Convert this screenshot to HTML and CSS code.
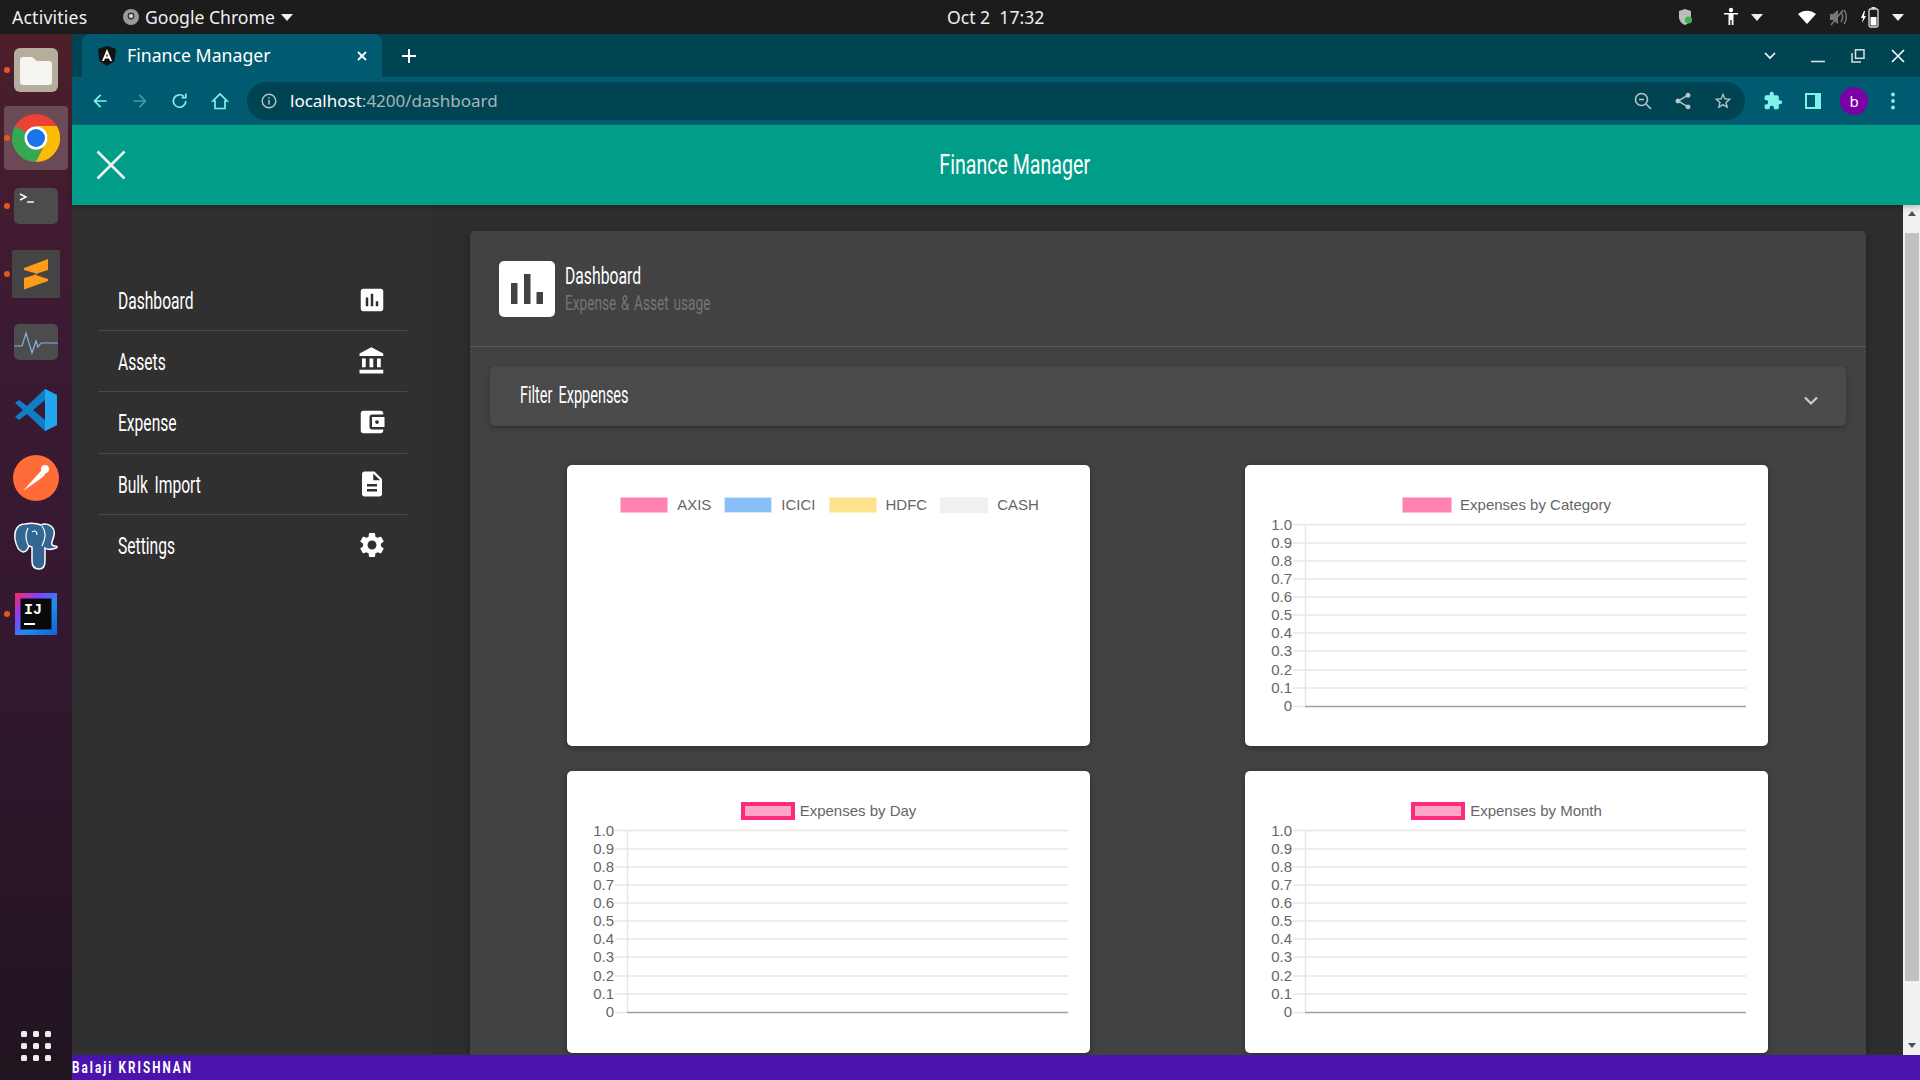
FILE: index.html
```html
<!DOCTYPE html>
<html lang="en">
<head>
    <meta charset="UTF-8">
    <title>Finance Manager</title>
    <link rel="stylesheet" href="styles.css">
</head>
<body>

    <svg class="icon-defs" width="0" height="0">
        <defs>
            <symbol id="plot" viewBox="0 -10 523 200">
                <g class="grid-line">
                    <line x1="48" x2="501" y1="1.5" y2="1.5"/>
                    <line x1="48" x2="501" y1="20" y2="20"/>
                    <line x1="48" x2="501" y1="38" y2="38"/>
                    <line x1="48" x2="501" y1="56" y2="56"/>
                    <line x1="48" x2="501" y1="74" y2="74"/>
                    <line x1="48" x2="501" y1="92" y2="92"/>
                    <line x1="48" x2="501" y1="110" y2="110"/>
                    <line x1="48" x2="501" y1="128" y2="128"/>
                    <line x1="48" x2="501" y1="147" y2="147"/>
                    <line x1="48" x2="501" y1="165" y2="165"/>
                    <line x1="48" x2="60" y1="183.5" y2="183.5"/>
                    <line x1="60.5" x2="60.5" y1="1" y2="184"/>
                </g>
                <line class="zero-line" x1="60" x2="501" y1="183.5" y2="183.5"/>
                <g class="tick-label">
                    <text x="47" y="7">1.0</text>
                    <text x="47" y="25">0.9</text>
                    <text x="47" y="43">0.8</text>
                    <text x="47" y="61">0.7</text>
                    <text x="47" y="79">0.6</text>
                    <text x="47" y="97">0.5</text>
                    <text x="47" y="115">0.4</text>
                    <text x="47" y="133">0.3</text>
                    <text x="47" y="152">0.2</text>
                    <text x="47" y="170">0.1</text>
                    <text x="47" y="188">0</text>
                </g>
            </symbol>
        </defs>
    </svg>

    <div class="topbar">
        <span class="topbar-activities">Activities</span>
        <span class="topbar-app">
            <svg class="app-glyph" width="16" height="16" viewBox="0 0 16 16"><circle cx="8" cy="8" r="8" fill="#9a9a9a"/><circle cx="8" cy="7" r="3.4" fill="#333"/><circle cx="8" cy="7" r="2" fill="#ddd"/></svg>
            Google Chrome
            <span class="caret"></span>
        </span>
        <span class="topbar-clock">Oct 2&nbsp; 17:32</span>
        <div class="tray">
            <svg class="tray-shield" width="18" height="20" viewBox="0 0 18 20"><path d="M8 2l6 2v6c0 4-3 7-6 8-3-1-6-4-6-8V4z" fill="#bdbdbd"/><circle cx="11.5" cy="13" r="3.6" fill="#3bb54a"/></svg>
            <svg class="tray-person" width="18" height="20" viewBox="0 0 18 20"><circle cx="9" cy="3" r="2.2" fill="#fff"/><path d="M2 6h14v1.6h-4.5V18H9.7v-5H8.3v5H6.500V7.600H2z" fill="#fff"/></svg>
            <span class="caret tray-caret-a"></span>
            <svg class="tray-wifi" width="20" height="16" viewBox="0 0 20 16"><path d="M1 5c5-4.500 13-4.500 18 0l-9 10z" fill="#fff"/></svg>
            <svg class="tray-sound" width="20" height="20" viewBox="0 0 20 20"><path d="M2 7h3l5-4v14l-5-4H2z" fill="#777"/><path d="M13 5c2 3 2 7 0 10M16 3c3 4 3 10 0 14" stroke="#777" stroke-width="1.500" fill="none"/><path d="M3 18L15 3" stroke="#777" stroke-width="1.500"/></svg>
            <svg class="tray-battery" width="20" height="24" viewBox="0 0 20 24"><path d="M4 6L1 13h2l-1 5 4-7H4l1-5z" fill="#fff"/><rect x="9" y="4" width="9" height="18" rx="1.500" fill="none" stroke="#ddd" stroke-width="1.300"/><rect x="11.500" y="2" width="4" height="2" fill="#ddd"/><rect x="10.500" y="12" width="6" height="8.500" fill="#fff"/></svg>
            <span class="caret tray-caret-b"></span>
        </div>
    </div>

    <div class="desktop">
        <aside class="dock">
            <div class="dock-item has-dot">
                <svg width="44" height="44" viewBox="0 0 44 44"><rect width="44" height="44" rx="6" fill="#b5ae9c"/><path d="M6 12a3 3 0 013-3h9l5 4h12a3 3 0 013 3v18a3 3 0 01-3 3H9a3 3 0 01-3-3z" fill="#f6f5f1"/></svg>
            </div>
            <div class="dock-item has-dot is-active">
                <svg width="48" height="48" viewBox="0 0 48 48"><circle cx="24" cy="24" r="24" fill="#ea4335"/><path d="M24 24L3.200 12A24 24 0 0024 48l12-24z" fill="#34a853"/><path d="M24 12h20.800A24 24 0 0124 48l12-24z" fill="#fbbc05"/><circle cx="24" cy="24" r="11.500" fill="#fff"/><circle cx="24" cy="24" r="9" fill="#1a73e8"/></svg>
            </div>
            <div class="dock-item has-dot">
                <svg width="44" height="36" viewBox="0 0 44 36"><rect width="44" height="36" rx="5" fill="#4c4c4c"/><path d="M6 6l6 3-6 3" stroke="#fff" stroke-width="1.400" fill="none"/><path d="M13 14h7" stroke="#fff" stroke-width="1.400"/></svg>
            </div>
            <div class="dock-item has-dot">
                <svg width="48" height="48" viewBox="0 0 48 48"><rect width="48" height="48" rx="2" fill="#444"/><path d="M12 18L36 9v11L22 24.500 36 29v2L12 39.500V28l14-4-14-4z" fill="#ff9a1a"/></svg>
            </div>
            <div class="dock-item">
                <svg width="44" height="36" viewBox="0 0 44 36"><rect width="44" height="36" rx="5" fill="#4c4c4c"/><path d="M0 22h8l4-13 6 20 4-12 2 6 3-4h17" stroke="#8aaee8" stroke-width="1.200" fill="none"/></svg>
            </div>
            <div class="dock-item">
                <svg width="42" height="42" viewBox="0 0 42 42"><path d="M30 0l12 6v30l-12 6-18-17-8 6-4-3 8-7-8-7 4-3 8 6z" fill="#0f7ec9"/><path d="M30 0l12 6v30l-12 6z" fill="#23a6f0"/><path d="M30 11v20l-12-10z" fill="#3c1a35"/></svg>
            </div>
            <div class="dock-item">
                <svg width="46" height="46" viewBox="0 0 46 46"><circle cx="23" cy="23" r="23" fill="#ff6c37"/><path d="M10 36L26 18l4 4z" fill="#fff"/><circle cx="32" cy="14" r="4" fill="#fff"/><path d="M26 18l6-6 3 3-5 7z" fill="#fff"/></svg>
            </div>
            <div class="dock-item">
                <svg width="46" height="48" viewBox="0 0 46 48"><path d="M12 2C4 2 1 9 2 17c1 6 3 12 8 13 3 0 5-3 6-6l3 1v14c0 6 3 8 7 8s6-3 6-8V26c3 2 6 2 11 0 2-1 1-2-1-2-2 0-4-1-3-4 2-6 4-11 0-15-3-3-8-4-11-2-5-2-11-2-16-1z" fill="#336791" stroke="#fff" stroke-width="1.500"/><path d="M15 6c-3 6-3 12 1 19M29 4c4 5 4 12 0 20M19 10c3-2 5-1 5 3" stroke="#fff" stroke-width="1.200" fill="none"/></svg>
            </div>
            <div class="dock-item has-dot">
                <svg width="42" height="42" viewBox="0 0 42 42"><defs><linearGradient id="ij" x1="0" y1="0" x2="1" y2="1"><stop offset="0" stop-color="#fe2857"/><stop offset=".3" stop-color="#8a3ffc"/><stop offset=".6" stop-color="#1d8cf0"/><stop offset="1" stop-color="#1064d8"/></linearGradient></defs><rect width="42" height="42" fill="url(#ij)"/><rect x="5.500" y="5.500" width="31" height="31" fill="#0a0a0a"/><text class="ij-text" x="9" y="21">IJ</text><rect x="9" y="30" width="11" height="2" fill="#fff"/></svg>
            </div>
            <div class="dock-apps">
                <span></span><span></span><span></span>
                <span></span><span></span><span></span>
                <span></span><span></span><span></span>
            </div>
        </aside>

        <div class="window">
            <div class="tabstrip">
                <div class="tab">
                    <svg class="tab-favicon" width="18" height="20" viewBox="0 0 18 20"><path d="M9 0l9 3-1.500 12L9 20l-7.500-5L0 3z" fill="#111"/><path d="M9 3L4 15h2l1-2.600h4L12 15h2zM8 10.500l1-3 1 3z" fill="#fff"/></svg>
                    <span class="tab-title">Finance Manager</span>
                    <svg class="tab-close" width="12" height="12" viewBox="0 0 12 12"><path d="M2 2l8 8M10 2l-8 8" stroke="#fff" stroke-width="1.800"/></svg>
                </div>
                <svg class="tab-new" width="16" height="16" viewBox="0 0 16 16"><path d="M8 1v14M1 8h14" stroke="#fff" stroke-width="2"/></svg>
                <div class="window-controls">
                    <svg class="tab-search" width="14" height="10" viewBox="0 0 14 10"><path d="M2 2l5 5 5-5" stroke="#fff" stroke-width="1.600" fill="none"/></svg>
                    <svg width="14" height="14" viewBox="0 0 14 14"><path d="M0 12.500h14" stroke="#ddd" stroke-width="1.600"/></svg>
                    <svg width="14" height="14" viewBox="0 0 14 14"><rect x="4.500" y=".8" width="8.500" height="8.500" fill="none" stroke="#ddd" stroke-width="1.500"/><path d="M1 4v9h9" fill="none" stroke="#ddd" stroke-width="1.500"/></svg>
                    <svg width="14" height="14" viewBox="0 0 14 14"><path d="M1 1l12 12M13 1L1 13" stroke="#fff" stroke-width="1.600"/></svg>
                </div>
            </div>

            <div class="toolbar">
                <div class="nav-buttons">
                    <svg width="20" height="20" viewBox="0 0 24 24"><path d="M20 11H7.800l5.600-5.600L12 4l-8 8 8 8 1.400-1.400L7.800 13H20z" fill="#7ff3ea"/></svg>
                    <svg width="20" height="20" viewBox="0 0 24 24"><path d="M4 11h12.200l-5.600-5.600L12 4l8 8-8 8-1.400-1.400 5.600-5.600H4z" fill="#3f9a9e"/></svg>
                    <svg width="20" height="20" viewBox="0 0 24 24"><path d="M19 12a7.500 7.500 0 11-2.400-5.500M19 3v5h-5" fill="none" stroke="#7ff3ea" stroke-width="2"/></svg>
                    <svg width="20" height="20" viewBox="0 0 24 24"><path d="M12 3.500L3.500 12H6v9h12v-9h2.500z" fill="none" stroke="#7ff3ea" stroke-width="2"/></svg>
                </div>
                <div class="omnibox">
                    <svg class="info-icon" width="16" height="16" viewBox="0 0 16 16"><circle cx="8" cy="8" r="6.800" fill="none" stroke="#b9c4c7" stroke-width="1.400"/><path d="M8 7v4.500M8 4.300v1.500" stroke="#b9c4c7" stroke-width="1.500"/></svg>
                    <span class="url-host">localhost</span><span class="url-rest">:4200/dashboard</span>
                    <div class="omni-actions">
                        <svg width="20" height="20" viewBox="0 0 20 20"><circle cx="8.500" cy="8.500" r="6" fill="none" stroke="#b9c4c7" stroke-width="1.600"/><path d="M13 13l5 5M6 8.500h5" stroke="#b9c4c7" stroke-width="1.600"/></svg>
                        <svg width="20" height="20" viewBox="0 0 24 24"><path d="M18 16.100c-.8 0-1.500.3-2 .8l-7.100-4.200c.1-.2.100-.5.100-.7s0-.5-.1-.7L16 7.200c.5.500 1.200.8 2 .8 1.700 0 3-1.300 3-3s-1.300-3-3-3-3 1.300-3 3c0 .2 0 .5.100.7L8 9.800C7.500 9.300 6.800 9 6 9c-1.700 0-3 1.300-3 3s1.300 3 3 3c.8 0 1.500-.3 2-.8l7.100 4.200c-.1.200-.1.400-.1.600 0 1.600 1.300 2.900 3 2.900s3-1.300 3-2.900-1.300-2.900-3-2.900z" fill="#b9c4c7"/></svg>
                        <svg width="20" height="20" viewBox="0 0 24 24"><path d="M22 9.240l-7.190-.62L12 2 9.190 8.630 2 9.240l5.460 4.730L5.820 21 12 17.270 18.180 21l-1.630-7.030zM12 15.400l-3.760 2.270 1-4.280-3.320-2.880 4.380-.38L12 6.100l1.710 4.040 4.380.38-3.320 2.880 1 4.280z" fill="#b9c4c7"/></svg>
                    </div>
                </div>
                <div class="toolbar-actions">
                    <svg width="20" height="20" viewBox="0 0 24 24"><path d="M20.500 11H19V7a2 2 0 00-2-2h-4V3.500a2.500 2.500 0 00-5 0V5H4a2 2 0 00-2 2v3.800h1.500a2.700 2.700 0 010 5.400H2V20a2 2 0 002 2h3.800v-1.500a2.700 2.700 0 015.400 0V22H17a2 2 0 002-2v-4h1.500a2.500 2.500 0 000-5z" fill="#7ff3ea"/></svg>
                    <svg width="20" height="20" viewBox="0 0 20 20"><path d="M2 2h16v16H2zM4 4v12h8V4z" fill="#7ff3ea" fill-rule="evenodd"/><rect x="12" y="3" width="6" height="14" fill="#7ff3ea"/></svg>
                    <span class="avatar">b</span>
                    <svg width="6" height="20" viewBox="0 0 6 20"><circle cx="3" cy="3.500" r="1.900" fill="#7ff3ea"/><circle cx="3" cy="10" r="1.900" fill="#7ff3ea"/><circle cx="3" cy="16.500" r="1.900" fill="#7ff3ea"/></svg>
                </div>
            </div>

            <header class="app-header">
                <svg class="menu-close" width="30" height="30" viewBox="0 0 30 30"><path d="M1.500 1.500l27 27M28.500 1.500l-27 27" stroke="#f2f2f2" stroke-width="2.600"/></svg>
                <h1 class="app-title"><span>Finance Manager</span></h1>
            </header>

            <div class="app-body">
                <nav class="sidenav">
                    <a class="nav-row"><span class="narrow">Dashboard</span>
                        <svg width="30" height="30" viewBox="0 0 24 24"><path d="M19 3H5c-1.100 0-2 .9-2 2v14c0 1.100.9 2 2 2h14c1.100 0 2-.9 2-2V5c0-1.100-.9-2-2-2zM9 17H7v-7h2v7zm4 0h-2V7h2v10zm4 0h-2v-4h2v4z"/></svg>
                    </a>
                    <a class="nav-row"><span class="narrow">Assets</span>
                        <svg width="30" height="30" viewBox="0 0 24 24"><path d="M4 10v7h3v-7H4zm6 0v7h3v-7h-3zM2 22h19v-3H2v3zm14-12v7h3v-7h-3zm-4.500-9L2 6v2h19V6l-9.500-5z"/></svg>
                    </a>
                    <a class="nav-row"><span class="narrow">Expense</span>
                        <svg width="30" height="30" viewBox="0 0 24 24"><path d="M21 18v1c0 1.100-.9 2-2 2H5c-1.110 0-2-.9-2-2V5c0-1.100.89-2 2-2h14c1.100 0 2 .9 2 2v1h-9c-1.110 0-2 .9-2 2v8c0 1.100.89 2 2 2h9zm-9-2h10V8H12v8zm4-2.500c-.83 0-1.500-.67-1.500-1.500s.67-1.500 1.500-1.500 1.500.67 1.500 1.500-.67 1.500-1.500 1.500z"/></svg>
                    </a>
                    <a class="nav-row"><span class="narrow">Bulk Import</span>
                        <svg width="30" height="30" viewBox="0 0 24 24"><path d="M14 2H6c-1.100 0-1.990.9-1.990 2L4 20c0 1.100.89 2 1.990 2H18c1.100 0 2-.9 2-2V8l-6-6zm2 16H8v-2h8v2zm0-4H8v-2h8v2zm-3-5V3.500L18.500 9H13z"/></svg>
                    </a>
                    <a class="nav-row"><span class="narrow">Settings</span>
                        <svg width="30" height="30" viewBox="0 0 24 24"><path d="M19.140 12.940c.04-.3.060-.61.060-.94 0-.32-.02-.64-.07-.94l2.030-1.580c.18-.14.23-.41.12-.61l-1.920-3.320c-.12-.22-.37-.29-.59-.22l-2.390.96c-.5-.38-1.030-.7-1.620-.94l-.36-2.540c-.04-.24-.24-.41-.48-.41h-3.840c-.24 0-.43.17-.47.41l-.36 2.540c-.59.24-1.130.57-1.620.94l-2.390-.96c-.22-.08-.47 0-.59.22L2.740 8.870c-.12.21-.08.47.12.61l2.030 1.580c-.05.3-.09.63-.09.94s.02.64.07.94l-2.030 1.580c-.18.14-.23.41-.12.61l1.920 3.320c.12.22.37.29.59.22l2.390-.96c.5.38 1.030.7 1.620.94l.36 2.54c.05.24.24.41.48.41h3.840c.24 0 .44-.17.47-.41l.36-2.540c.59-.24 1.130-.56 1.620-.94l2.390.96c.22.08.47 0 .59-.22l1.920-3.320c.12-.22.070-.47-.12-.61l-2.010-1.580zM12 15.600c-1.980 0-3.600-1.620-3.600-3.600s1.620-3.600 3.600-3.600 3.600 1.620 3.600 3.600-1.620 3.600-3.600 3.600z"/></svg>
                    </a>
                </nav>

                <main class="content">
                    <section class="panel">
                        <div class="panel-head">
                            <svg class="head-icon" width="56" height="56" viewBox="0 0 56 56"><rect width="56" height="56" rx="5" fill="#fff"/><path d="M12 22h6.500v21H12zM25 13h6.500v30H25zM37.500 31H44v12h-6.500z" fill="#424242"/></svg>
                            <div class="head-text">
                                <div class="head-title">Dashboard</div>
                                <div class="head-sub">Expense &amp; Asset usage</div>
                            </div>
                        </div>
                        <div class="filter-bar">
                            <span class="filter-label">Filter Exppenses</span>
                            <svg class="filter-chevron" width="16" height="10" viewBox="0 0 16 10"><path d="M2 1.500l6 6 6-6" stroke="#cfcfcf" stroke-width="2.200" fill="none"/></svg>
                        </div>
                        <div class="chart-grid">
                            <div class="chart-card">
                                <div class="legend legend-multi">
                                    <span class="swatch swatch-pink"></span><span class="legend-label">AXIS</span>
                                    <span class="swatch swatch-blue"></span><span class="legend-label">ICICI</span>
                                    <span class="swatch swatch-yellow"></span><span class="legend-label">HDFC</span>
                                    <span class="swatch swatch-grey"></span><span class="legend-label">CASH</span>
                                </div>
                            </div>
                            <div class="chart-card">
                                <div class="legend">
                                    <span class="swatch swatch-pink"></span><span class="legend-label">Expenses by Category</span>
                                </div>
                                <svg class="plot"><use href="#plot"/></svg>
                            </div>
                            <div class="chart-card">
                                <div class="legend">
                                    <span class="swatch swatch-line"></span><span class="legend-label">Expenses by Day</span>
                                </div>
                                <svg class="plot"><use href="#plot"/></svg>
                            </div>
                            <div class="chart-card">
                                <div class="legend">
                                    <span class="swatch swatch-line"></span><span class="legend-label">Expenses by Month</span>
                                </div>
                                <svg class="plot"><use href="#plot"/></svg>
                            </div>
                        </div>
                    </section>
                    <div class="scrollbar">
                        <span class="scroll-up"></span>
                        <span class="scroll-thumb"></span>
                        <span class="scroll-down"></span>
                    </div>
                </main>
            </div>

            <footer class="app-footer"><span>Balaji KRISHNAN</span></footer>
        </div>
    </div>

</body>
</html>
```

FILE: styles.css
```css
* {
    box-sizing: border-box;
}
html, body {
    margin: 0;
    height: 100%;
    overflow: hidden;
}
body {
    display: flex;
    flex-direction: column;
    width: 1920px;
    height: 1080px;
    background: #303030;
    font-family: "Liberation Sans", Arial, sans-serif;
}
.icon-defs {
    position: absolute;
}
svg {
    display: block;
    flex-shrink: 0;
}

/* gnome bar */
.topbar {
    position: relative;
    flex: 0 0 34px;
    display: flex;
    align-items: center;
    padding-left: 12px;
    background: #1c1c1c;
    color: #f0f0f0;
    font-family: "Noto Sans", sans-serif;
    font-size: 17.6px;
}
.topbar-activities {
    width: 111px;
    letter-spacing: 0.2px;
}
.topbar-app {
    display: flex;
    align-items: center;
    gap: 6px;
}
.topbar-clock {
    position: absolute;
    left: 947px;
    top: 5px;
}
.caret {
    width: 0;
    height: 0;
    border-left: 6px solid transparent;
    border-right: 6px solid transparent;
    border-top: 7px solid #f0f0f0;
}
.tray {
    position: absolute;
    right: 16px;
    top: 0;
    height: 34px;
    display: flex;
    align-items: center;
    gap: 13px;
}
.tray-person {
    margin-left: 14px;
}
.tray-caret-a {
    margin-left: -2px;
}
.tray-wifi {
    margin-left: 21px;
}
.tray-sound {
    margin-left: -2px;
}
.tray-battery, .tray-caret-b {
    margin-left: -1px;
}

/* dock */
.desktop {
    flex: 1;
    display: flex;
    min-height: 0;
}
.dock {
    width: 72px;
    padding-top: 2px;
    display: flex;
    flex-direction: column;
    background: linear-gradient(#4c1f2a 0, #3b1a33 300px, #33182f 620px, #20141f 100%);
}
.dock-item {
    position: relative;
    height: 68px;
    display: flex;
    align-items: center;
    justify-content: center;
}
.dock-item.is-active::after {
    content: "";
    position: absolute;
    left: 4px;
    right: 4px;
    top: 2px;
    bottom: 2px;
    border-radius: 4px;
    background: rgba(255, 255, 255, 0.2);
}
.dock-item svg {
    position: relative;
    z-index: 1;
}
.dock-item.has-dot::before {
    content: "";
    position: absolute;
    left: 4px;
    top: 31px;
    width: 6px;
    height: 6px;
    border-radius: 50%;
    background: #e95420;
    z-index: 2;
}
.ij-text {
    font-family: "Liberation Mono", monospace;
    font-weight: bold;
    font-size: 15px;
    fill: #fff;
}
.dock-apps {
    margin: auto 0 19px 21px;
    display: grid;
    grid-template-columns: repeat(3, 6px);
    grid-auto-rows: 6px;
    gap: 6px;
    width: 30px;
}
.dock-apps span {
    border-radius: 1.5px;
    background: #eee;
}

/* browser chrome */
.window {
    flex: 1;
    min-width: 0;
    display: flex;
    flex-direction: column;
}
.tabstrip {
    flex: 0 0 43px;
    display: flex;
    align-items: center;
    background: #004454;
    color: #fff;
}
.tab {
    margin-left: 10px;
    width: 300px;
    height: 43px;
    display: flex;
    align-items: center;
    padding: 0 14px 0 16px;
    border-radius: 8px 8px 0 0;
    background: #005b70;
    font-family: "Noto Sans", sans-serif;
    font-size: 17.7px;
}
.tab-title {
    margin: -2px 0 0 11px;
    flex: 1;
}
.tab-new {
    margin-left: 19px;
}
.window-controls {
    margin-left: auto;
    padding-right: 15px;
    display: flex;
    align-items: center;
    gap: 26px;
}
.tab-search {
    margin-right: 8px;
}
.toolbar {
    flex: 0 0 48px;
    display: flex;
    align-items: center;
    background: #005b70;
    border-bottom: 1px solid #0b6f80;
}
.nav-buttons {
    width: 175px;
    padding-left: 18px;
    display: flex;
    gap: 20px;
}
.omnibox {
    width: 1498px;
    height: 38px;
    margin-top: 1px;
    display: flex;
    align-items: center;
    padding: 0 12px 0 14px;
    border-radius: 19px;
    background: #004454;
    font-family: "Noto Sans", sans-serif;
    font-size: 17px;
}
.info-icon {
    margin-right: 13px;
}
.url-host {
    margin-top: -2px;
    color: #fff;
}
.url-rest {
    margin-top: -2px;
    color: #a5b6ba;
}
.omni-actions {
    margin-left: auto;
    display: flex;
    gap: 20px;
}
.toolbar-actions {
    margin-left: 18px;
    display: flex;
    align-items: center;
    gap: 20px;
}
.avatar {
    width: 28px;
    height: 28px;
    margin: 0 2px 0 -3px;
    border-radius: 50%;
    background: #7b00a5;
    color: #fff;
    font-family: "Noto Sans", sans-serif;
    font-size: 15px;
    line-height: 28px;
    text-align: center;
}

/* app - Roboto squeezed to the width of the condensed face in the original */
.app-header {
    flex: 0 0 80px;
    display: flex;
    align-items: center;
    padding-left: 24px;
    background: #009e88;
    color: #fff;
    box-shadow: 0 2px 6px rgba(0, 0, 0, 0.25);
    position: relative;
    z-index: 3;
}
.app-title {
    flex: 1;
    margin: -2px 0 0;
    padding-right: 16px;
    text-align: center;
    font-family: Roboto, sans-serif;
    font-weight: 400;
    font-size: 28px;
}
.app-title span {
    display: inline-block;
    transform: scaleX(0.7);
}
.app-body {
    flex: 1;
    min-height: 0;
    display: flex;
}
.sidenav {
    flex: 0 0 360px;
    padding: 65px 25px 0 26px;
    background: #303030;
}
.nav-row {
    height: 61.2px;
    display: flex;
    align-items: center;
    justify-content: space-between;
    padding: 0 20px 0 20px;
    border-bottom: 1px solid #484848;
    color: #fff;
    font-family: Roboto, sans-serif;
    font-size: 24px;
}
.nav-row:last-child {
    border-bottom: 0;
}
.nav-row svg {
    fill: #fff;
}
.narrow {
    display: inline-block;
    margin-top: 2px;
    word-spacing: 4px;
    transform: scaleX(0.65);
    transform-origin: left center;
}
.content {
    flex: 1;
    min-width: 0;
    position: relative;
    display: flex;
    justify-content: space-between;
    padding: 26px 0 0 38px;
    background: #2e2e2e;
    overflow: hidden;
}
.panel {
    width: 1396px;
    height: 1100px;
    border-radius: 5px;
    background: #424242;
    box-shadow: 0 2px 8px rgba(0, 0, 0, 0.3);
}
.panel-head {
    height: 116px;
    display: flex;
    align-items: center;
    gap: 10px;
    padding-left: 29px;
    border-bottom: 1px solid #595959;
    font-family: Roboto, sans-serif;
}
.head-text {
    margin-top: -3px;
}
.head-title {
    color: #fff;
    font-size: 24px;
    line-height: 32px;
    transform: scaleX(0.655);
    transform-origin: left center;
}
.head-sub {
    margin-top: -1px;
    color: #757575;
    font-size: 21px;
    line-height: 24px;
    white-space: nowrap;
    word-spacing: 2px;
    transform: scaleX(0.65);
    transform-origin: left center;
}
.filter-bar {
    height: 60px;
    margin: 19px 20px 0;
    display: flex;
    align-items: center;
    justify-content: space-between;
    padding: 0 27px 0 30px;
    border-radius: 5px;
    background: #4a4a4a;
    box-shadow: 0 2px 4px rgba(0, 0, 0, 0.3);
    color: #fff;
    font-family: Roboto, sans-serif;
    font-size: 23px;
}
.filter-label {
    margin-top: -2px;
    word-spacing: 4px;
    transform: scaleX(0.63);
    transform-origin: left center;
}
.filter-chevron {
    margin-top: 9px;
}
.chart-grid {
    display: grid;
    grid-template-columns: 523px 523px;
    grid-template-rows: 281px 282px;
    column-gap: 155px;
    row-gap: 25px;
    padding: 39px 0 0 97px;
}
.chart-card {
    border-radius: 5px;
    background: #fff;
    box-shadow: 0 2px 6px rgba(0, 0, 0, 0.3);
}
.legend {
    height: 48px;
    padding-top: 31px;
    display: flex;
    justify-content: center;
    align-items: center;
    color: #666;
    font-size: 15px;
}
.swatch {
    width: 50px;
    height: 16px;
    margin-right: 8px;
}
.legend-label {
    line-height: 15px;
    margin-top: -1px;
}
.legend-multi {
    padding-left: 2px;
}
.legend-multi .swatch {
    width: 48px;
    margin-right: 9px;
}
.legend-multi .legend-label {
    margin-right: 13px;
}
.legend-multi .legend-label:last-child {
    margin-right: 0;
}
.swatch-pink {
    background: #ff82b2;
    border: 1px solid #ffc0d8;
}
.swatch-blue {
    background: #87c1f7;
    border: 1px solid #d4e8fb;
}
.swatch-yellow {
    background: #ffe28e;
    border: 1px solid #fff2c8;
}
.swatch-grey {
    background: #f0f1f3;
}
.swatch-line {
    width: 54px;
    height: 18px;
    margin-right: 5px;
    background: #ffa6c6;
    border: 4px solid #fd2b7d;
}
.plot {
    width: 523px;
    height: 200px;
}
.grid-line line {
    stroke: #e6e6e6;
    stroke-width: 1.5;
}
.zero-line {
    stroke: #a0a0a0;
    stroke-width: 1.5;
}
.tick-label text {
    fill: #666;
    font-size: 15px;
    text-anchor: end;
    font-family: "Liberation Sans", Arial, sans-serif;
}

/* page scrollbar is over the content */
.scrollbar {
    position: absolute;
    right: 0;
    top: 0;
    bottom: 0;
    width: 17px;
    background: #f1f1f1;
}
.scroll-thumb {
    position: absolute;
    left: 2px;
    right: 1px;
    top: 28px;
    height: 748px;
    background: #c1c1c1;
}
.scroll-up, .scroll-down {
    position: absolute;
    left: 5px;
    width: 0;
    height: 0;
    border-left: 4px solid transparent;
    border-right: 4px solid transparent;
}
.scroll-up {
    top: 6px;
    border-bottom: 5px solid #505050;
}
.scroll-down {
    bottom: 7px;
    border-top: 5px solid #505050;
}

.app-footer {
    flex: 0 0 25px;
    background: #4a13ab;
    color: #fff;
    font-family: Roboto, sans-serif;
    font-weight: 700;
    font-size: 17px;
    letter-spacing: 3px;
    line-height: 25px;
    position: relative;
    z-index: 3;
}
.app-footer span {
    display: inline-block;
    transform: scaleX(0.686);
    transform-origin: left center;
}
```
